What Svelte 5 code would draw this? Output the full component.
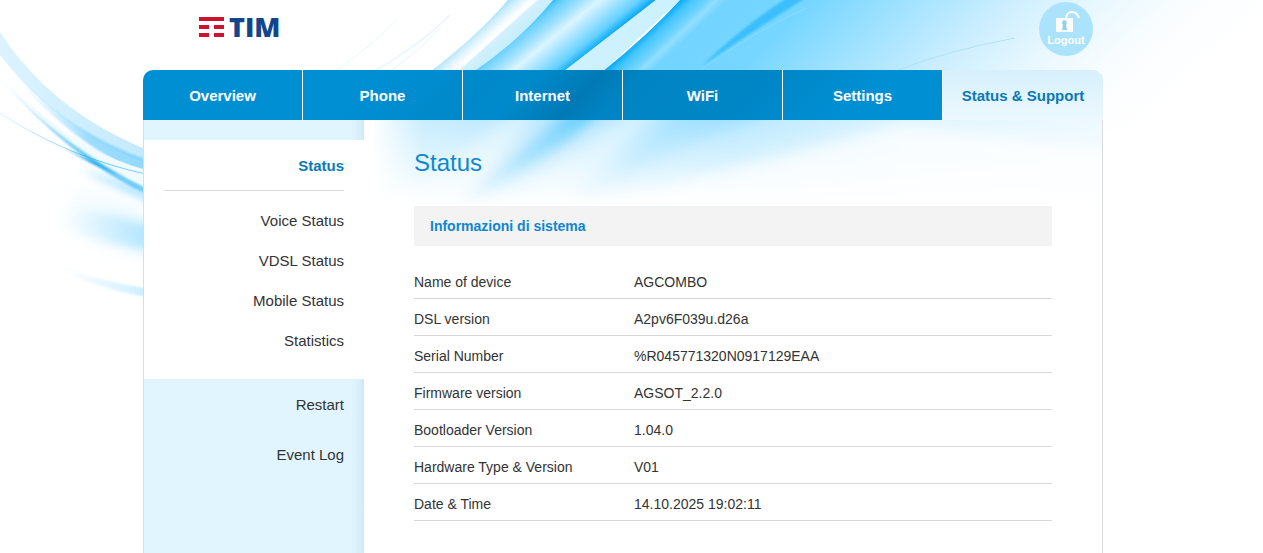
<script>
  const tabs = ['Overview', 'Phone', 'Internet', 'WiFi', 'Settings', 'Status & Support'];
  const current = 'Status & Support';
  const statusLinks = ['Voice Status', 'VDSL Status', 'Mobile Status', 'Statistics'];
  const otherLinks = ['Restart', 'Event Log'];
  const info = [
    ['Name of device', 'AGCOMBO'],
    ['DSL version', 'A2pv6F039u.d26a'],
    ['Serial Number', '%R045771320N0917129EAA'],
    ['Firmware version', 'AGSOT_2.2.0'],
    ['Bootloader Version', '1.04.0'],
    ['Hardware Type & Version', 'V01'],
    ['Date & Time', '14.10.2025 19:02:11']
  ];
</script>

<div class="page">
  <svg class="backdrop" viewBox="0 0 1263 553" preserveAspectRatio="xMidYMin slice" aria-hidden="true">
    <defs>
      <linearGradient id="ribbonA" gradientUnits="userSpaceOnUse" x1="508" x2="553" y1="0" y2="0" gradientTransform="skewX(-48)">
        <stop offset="0" stop-color="#a6e0f8" /><stop offset=".2" stop-color="#cdeefc" /><stop offset=".5" stop-color="#fafdff" />
        <stop offset=".62" stop-color="#ffffff" /><stop offset=".68" stop-color="#d3f0fd" /><stop offset="1" stop-color="#c9effd" />
      </linearGradient>
      <linearGradient id="ribbonB" gradientUnits="userSpaceOnUse" x1="553" x2="656" y1="0" y2="0" gradientTransform="skewX(-51)">
        <stop offset="0" stop-color="#33bdf5" /><stop offset=".1" stop-color="#69d0fd" /><stop offset=".28" stop-color="#9fe1ff" />
        <stop offset=".45" stop-color="#dbf5ff" /><stop offset=".62" stop-color="#aae5ff" /><stop offset=".84" stop-color="#65d1ff" /><stop offset="1" stop-color="#00a6f8" />
      </linearGradient>
      <linearGradient id="ribbonD" gradientUnits="userSpaceOnUse" x1="680" x2="1280" y1="0" y2="0" gradientTransform="skewX(-47)">
        <stop offset="0" stop-color="#04aaf8" /><stop offset=".02" stop-color="#46c6ff" /><stop offset=".05" stop-color="#76d6ff" />
        <stop offset=".06" stop-color="#93dfff" /><stop offset=".08" stop-color="#72d4ff" /><stop offset=".22" stop-color="#76d6ff" />
        <stop offset=".38" stop-color="#a0e2ff" /><stop offset=".55" stop-color="#cceeff" /><stop offset=".7" stop-color="#e8f8ff" />
        <stop offset=".85" stop-color="#fafdff" /><stop offset="1" stop-color="#ffffff" />
      </linearGradient>
      <linearGradient id="fall" x1="0" x2="0" y1="0" y2="1">
        <stop offset="0" stop-color="#fff" /><stop offset=".4" stop-color="#fff" /><stop offset="1" stop-color="#000" />
      </linearGradient>
      <linearGradient id="fromLeft" gradientUnits="userSpaceOnUse" x1="0" x2="143" y1="0" y2="0">
        <stop offset="0" stop-color="#cdeeff" stop-opacity=".7" /><stop offset="1" stop-color="#c3eafd" />
      </linearGradient>
      <linearGradient id="deepLeft" gradientUnits="userSpaceOnUse" x1="10" x2="143" y1="0" y2="0">
        <stop offset="0" stop-color="#b5e6ff" stop-opacity="0" /><stop offset=".6" stop-color="#7bd2fc" /><stop offset="1" stop-color="#70cdfa" />
      </linearGradient>
      <linearGradient id="softLeft" gradientUnits="userSpaceOnUse" x1="60" x2="150" y1="0" y2="0">
        <stop offset="0" stop-color="#b9e8ff" stop-opacity="0" /><stop offset="1" stop-color="#a5e1ff" />
      </linearGradient>
      <linearGradient id="streakLeft" gradientUnits="userSpaceOnUse" x1="0" x2="143" y1="0" y2="0">
        <stop offset="0" stop-color="#7fd3fa" stop-opacity=".4" /><stop offset=".6" stop-color="#2fb4f2" /><stop offset="1" stop-color="#4fc2f8" />
      </linearGradient>
      <mask id="fallMask"><rect x="400" width="863" height="190" fill="url(#fall)" /></mask>
      <filter id="b1" x="-20%" y="-20%" width="140%" height="140%"><feGaussianBlur stdDeviation="1" /></filter>
      <filter id="b4" x="-20%" y="-60%" width="140%" height="220%"><feGaussianBlur stdDeviation="4" /></filter>
      <filter id="b9" x="-30%" y="-50%" width="160%" height="200%"><feGaussianBlur stdDeviation="9" /></filter>
    </defs>

    <path d="M0 150Q60 175 90 190T160 225V255Q60 235 10 215Z" fill="url(#softLeft)" opacity=".4" filter="url(#b9)" />
    <path d="M70 205Q120 218 170 230V252Q120 248 60 228Z" fill="url(#softLeft)" opacity=".8" filter="url(#b4)" />
    <path d="M80 168Q110 178 170 200V208Q120 192 80 168Z" fill="#62ccff" opacity=".6" filter="url(#b4)" />
    <path d="M0 32Q52 112 150 151V164Q62 135 0 55Z" fill="url(#fromLeft)" />
    <path d="M5 65Q66 132 150 161V176Q75 150 5 65Z" fill="url(#deepLeft)" opacity=".75" filter="url(#b1)" />
    <path d="M20 95Q80 153 150 171V186Q80 160 20 95Z" fill="#f0faff" />
    <path d="M0 113Q66 157 150 175" fill="none" stroke="url(#streakLeft)" stroke-width="1" opacity=".7" />
    <path d="M0 77Q62 148 150 190V196Q66 157 0 77Z" fill="url(#streakLeft)" opacity=".75" filter="url(#b1)" />
    <path d="M65 149L98 163L118 175L90 163Z" fill="#009be6" opacity=".6" filter="url(#b1)" />
    <path d="M40 258Q90 281 160 290V299Q90 290 40 258Z" fill="url(#softLeft)" opacity=".6" filter="url(#b1)" />

    <g fill="none" stroke="#d3eef8" stroke-linecap="round">
      <path d="M334 72Q370 47 397 20" opacity=".6" />
      <path d="M376 70Q420 45 450 15" stroke-width="2" opacity=".4" />
      <path d="M392 70Q420 50 440 28" opacity=".6" />
    </g>
    <path d="M508 0Q478 35 430 72H473Q520 40 553 0Z" fill="url(#ribbonA)" />
    <path d="M553 0Q520 40 473 72H563L656 0Z" fill="url(#ribbonB)" />
    <path d="M656 0L563 72H602L680 0Z" fill="#cdf1fe" />
    <path d="M680 0Q648 35 602 72L500 190H1263V0Z" fill="url(#ribbonD)" mask="url(#fallMask)" />
    <path d="M810 -5L790 -4Q740 28 702 66Q750 33 810 -5Z" fill="#12b0fa" opacity=".6" filter="url(#b1)" />
    <path d="M700 70Q750 34 806 8" fill="none" stroke="#a4e3ff" opacity=".4" />
    <path d="M898 70Q950 50 1015 38" fill="none" stroke="#a9dff3" stroke-width="1" opacity=".8" />
  </svg>

  <div class="shell">
    <header>
      <a class="logo" href="#home" aria-label="TIM">
        <svg width="100" height="44" viewBox="0 -10 100 44">
          <g fill="#d0112f">
            <path d="M1 3H26V7H1ZM1 11H11V15H1ZM16 11H26V15H16ZM1 19H11V23H1ZM16 19H26V23H16Z" />
          </g>
          <text x="31" y="23" fill="#12458c" font-family="Open Sans, sans-serif" font-weight="800" font-size="27">TIM</text>
        </svg>
      </a>
      <button class="logout" type="button">
        <svg width="28" height="22" viewBox="0 0 28 22" aria-hidden="true">
          <path d="M14 8V7Q15 1 20 1Q25 1 27 7" fill="none" stroke="#fff" stroke-width="2" />
          <path d="M4 7H21V21H4Z" fill="#fff" />
          <path d="M12 9A3 3 0 0 1 14 14L15 19H10L11 14A3 3 0 0 1 12 9Z" fill="#8fd2f0" />
        </svg>
        <span>Logout</span>
      </button>
    </header>

    <nav class="tabs">
      {#each tabs as tab}
        <a href="#{tab}" class:current={tab === current}>{tab}</a>
      {/each}
    </nav>

    <div class="panel">
      <aside>
        <div class="group">
          <h2>Status</h2>
          {#each statusLinks as link}
            <a href="#{link}">{link}</a>
          {/each}
        </div>
        <div class="others">
          {#each otherLinks as link}
            <a href="#{link}">{link}</a>
          {/each}
        </div>
      </aside>

      <main>
        <svg class="glow" viewBox="364 120 738 90" preserveAspectRatio="none" aria-hidden="true">
          <defs>
            <linearGradient id="down" x1="0" x2="0" y1="0" y2="1">
              <stop offset="0" stop-color="#fff" stop-opacity="0" /><stop offset=".45" stop-color="#fff" stop-opacity=".45" />
              <stop offset=".95" stop-color="#fff" />
            </linearGradient>
            <linearGradient id="across" gradientUnits="userSpaceOnUse" x1="364" x2="1102" y1="0" y2="0">
              <stop offset="0" stop-color="#fff" /><stop offset=".01" stop-color="#fff" /><stop offset=".08" stop-color="#c9edfd" />
              <stop offset=".3" stop-color="#b2e6ff" /><stop offset=".5" stop-color="#b8e8ff" /><stop offset=".75" stop-color="#dff5ff" />
              <stop offset="1" stop-color="#eef9ff" />
            </linearGradient>
            <filter id="g6" x="-20%" y="-20%" width="140%" height="140%"><feGaussianBlur stdDeviation="7" /></filter>
          </defs>
          <rect x="364" y="120" width="738" height="90" fill="url(#across)" />
          <g filter="url(#g6)">
            <path d="M525 105L380 215H450L545 105Z" fill="#fff" opacity=".4" />
            <path d="M580 105L440 215H465L570 140L606 105Z" fill="#4cc6fb" opacity=".7" />
            <path d="M635 105L490 215H555L665 105Z" fill="#fff" opacity=".4" />
            <path d="M690 105L570 205L680 150L790 105Z" fill="#7dd5ff" opacity=".35" />
            <path d="M900 125L560 215H1110V150Z" fill="#fff" opacity=".7" />
          </g>
          <rect x="364" y="120" width="738" height="90" fill="url(#down)" />
        </svg>
        <h1>Status</h1>
        <h3>Informazioni di sistema</h3>
        <table>
          <tbody>
            {#each info as [name, value]}
              <tr><th scope="row">{name}</th><td>{value}</td></tr>
            {/each}
          </tbody>
        </table>
      </main>
    </div>
  </div>
</div>

<style>
  :global(body) { background: #fff; }
  .page {
    position: relative;
    display: flex;
    justify-content: center;
    min-height: 100vh;
    padding-right: 17px;
    box-sizing: border-box;
    font-family: "Liberation Sans", Arial, sans-serif;
    font-size: 15px;
    color: #333;
    overflow: hidden;
  }
  a { color: inherit; text-decoration: none; }
  .backdrop { position: absolute; inset: 0; width: 100%; height: 100%; }
  .shell { position: relative; display: flex; flex-direction: column; width: 100%; max-width: 960px; }
  header {
    display: flex;
    justify-content: space-between;
    align-items: flex-start;
    height: 70px;
    box-sizing: border-box;
    padding: 2px 10px 0 55px;
  }
  .logo { display: block; padding-top: 2px; }
  .logo svg { display: block; }
  .logout {
    display: flex;
    flex-direction: column;
    align-items: center;
    width: 54px;
    height: 54px;
    padding: 9px 0 0;
    border: 0;
    border-radius: 50%;
    background: #ace3fc;
    color: #fff;
    font: bold 11px/14px "Liberation Sans", Arial, sans-serif;
    cursor: pointer;
  }
  .logout svg { flex: none; }
  .tabs {
    display: grid;
    grid-template-columns: repeat(6, 1fr);
    border-radius: 10px 10px 0 0;
    overflow: hidden;
    background:
      linear-gradient(135deg, transparent 24%, #0078b44d 36%, #0078b433 39%, #00659966 44%, #00659980 46%, #0074ad66 50%, #0074ad59 62%, transparent 73%),
      linear-gradient(90deg, #008fd3 84%, #e2f4fd 84%);
  }
  .tabs a {
    padding-top: 2px;
    border-right: 1px solid #fff;
    color: #fff;
    font-weight: bold;
    line-height: 48px;
    text-align: center;
  }
  .tabs .current {
    border: 0;
    background: linear-gradient(#d6f0fd, #ecf8fe);
    color: #0a7ab5;
  }
  .panel {
    flex: 1;
    display: flex;
    border: solid #dadde0;
    border-width: 0 1px;
    background: #fff;
  }
  aside {
    flex: none;
    width: 220px;
    padding-top: 20px;
    box-sizing: border-box;
    background: linear-gradient(90deg, #e0f5ff 95%, #cfeaf5);
    text-align: right;
  }
  .group { padding: 0 20px 18px; background: #fff; }
  h2 {
    margin: 0 0 10px;
    border-bottom: 1px solid #d8d8d8;
    color: #0a7ab5;
    font-size: 15px;
    line-height: 50px;
    padding-top: 1px;
    height: 49px;
  }
  aside a { display: block; line-height: 40px; }
  .others { padding: 1px 20px; }
  .others a { line-height: 50px; }
  main { position: relative; flex: 1; min-width: 0; padding: 26px 50px 32px; }
  .glow { position: absolute; top: 0; left: 0; width: 100%; height: 90px; }
  h1 {
    position: relative;
    margin: 0 0 26px;
    color: #0d86cf;
    font-size: 24px;
    font-weight: normal;
    line-height: 34px;
  }
  h3 {
    position: relative;
    margin: 0 0 16px;
    padding-left: 16px;
    background: #f3f3f3;
    color: #0d86cf;
    font-size: 14px;
    line-height: 40px;
  }
  table { width: 100%; border-collapse: separate; border-spacing: 0; table-layout: fixed; font-size: 14px; }
  th, td {
    height: 37px;
    padding: 4px 0 0;
    box-sizing: border-box;
    border-bottom: 1px solid #d8d8d8;
    font-weight: normal;
    text-align: left;
  }
  th { width: 220px; }
</style>
